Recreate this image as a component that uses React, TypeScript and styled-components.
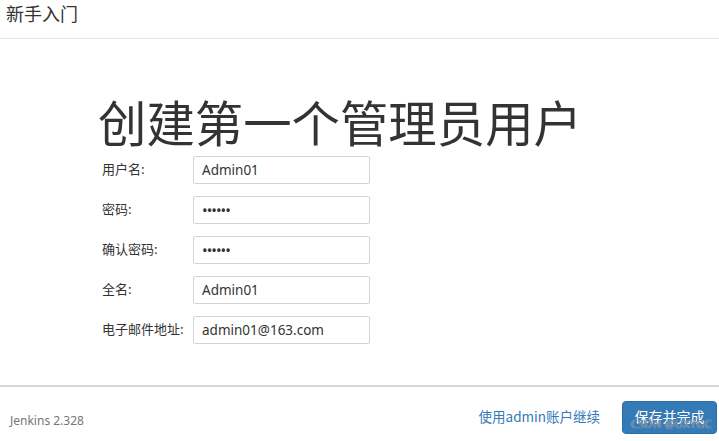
import React from "react";
import styled, { createGlobalStyle } from "styled-components";

const Global = createGlobalStyle`
  html, body { margin: 0; padding: 0; background: #fff; }
  body { font-family: "Noto Sans", "Noto Sans CJK SC", sans-serif; color: #333; }
  * { box-sizing: border-box; }
`;

const Page = styled.div`
  width: 719px;
  height: 441px;
  display: flex;
  flex-direction: column;
  overflow: hidden;
  position: relative;
`;

const Header = styled.header`
  height: 39px;
  flex: none;
  border-bottom: 1px solid #e5e5e5;
  padding: 1px 0 0 6px;
  font-size: 18px;
  line-height: 24px;
  color: #333;
  font-family: "Noto Sans CJK SC", sans-serif;
`;

const Main = styled.main`
  flex: 1;
  padding: 52px 0 0 98px;
`;

const Title = styled.h1`
  margin: 0 0 5px 0;
  font-family: "Noto Sans CJK SC", sans-serif;
  font-weight: 400;
  font-size: 48.4px;
  line-height: 60px;
  color: #333;
`;

const Form = styled.div`
  display: flex;
  flex-direction: column;
  gap: 12px;
  padding-left: 4px;
`;

const Row = styled.div`
  display: flex;
  align-items: center;
  height: 28px;
`;

const Label = styled.label`
  width: 91px;
  flex: none;
  font-size: 13px;
  color: #333;
  font-family: "Noto Sans CJK SC", sans-serif;
  padding-bottom: 3px;
`;

const Input = styled.div<{ $secret?: boolean }>`
  width: 177px;
  height: 28px;
  border: 1px solid #d4d4d4;
  border-radius: 2px;
  padding: 0 0 0 8px;
  display: flex;
  align-items: center;
  font-size: ${(p) => (p.$secret ? "15px" : "13.5px")};
  letter-spacing: ${(p) => (p.$secret ? "-1px" : "0")};
  color: #333;
  font-family: "Noto Sans", sans-serif;
`;

const Footer = styled.footer`
  height: 56px;
  flex: none;
  border-top: 2px solid #d8d8d8;
  display: flex;
  align-items: center;
  padding: 0 2px 0 10px;
`;

const Version = styled.span`
  font-size: 12px;
  color: #777;
  flex: 1;
  padding-top: 12px;
  font-family: "Noto Sans", sans-serif;
`;

const Link = styled.a`
  font-size: 13.5px;
  color: #337ab7;
  text-decoration: none;
  margin-right: 22px;
  padding-top: 4px;
  font-family: "Noto Sans CJK SC", sans-serif;
`;

const ButtonWrap = styled.div`
  position: relative;
  margin-top: 7px;
`;

const Button = styled.button`
  width: 95px;
  height: 33px;
  border: 1px solid #2e6da4;
  background: #337ab7;
  color: #fff;
  border-radius: 4px;
  font-size: 14px;
  font-family: "Noto Sans CJK SC", sans-serif;
  line-height: 1;
  padding: 0 0 3px 0;
  display: block;
`;

const Watermark = styled.span`
  position: absolute;
  left: 9px;
  top: 17px;
  font-size: 11px;
  line-height: 12px;
  font-family: "Noto Sans", sans-serif;
  color: rgba(95, 110, 125, 0.95);
  text-shadow: 0 0 1px rgba(255, 255, 255, 0.9);
  letter-spacing: 0.3px;
  white-space: nowrap;
  pointer-events: none;
`;

const fields: { label: string; value: string; secret?: boolean }[] = [
  { label: "用户名:", value: "Admin01" },
  { label: "密码:", value: "••••••", secret: true },
  { label: "确认密码:", value: "••••••", secret: true },
  { label: "全名:", value: "Admin01" },
  { label: "电子邮件地址:", value: "admin01@163.com" },
];

export default function App() {
  return (
    <Page>
      <Global />
      <Header>新手入门</Header>
      <Main>
        <Title>创建第一个管理员用户</Title>
        <Form>
          {fields.map((f) => (
            <Row key={f.label}>
              <Label>{f.label}</Label>
              <Input $secret={f.secret}>{f.value}</Input>
            </Row>
          ))}
        </Form>
      </Main>
      <Footer>
        <Version>Jenkins 2.328</Version>
        <Link href="#">使用admin账户继续</Link>
        <ButtonWrap>
          <Button>保存并完成</Button>
          <Watermark>CSDN @UXYGC</Watermark>
        </ButtonWrap>
      </Footer>
    </Page>
  );
}
